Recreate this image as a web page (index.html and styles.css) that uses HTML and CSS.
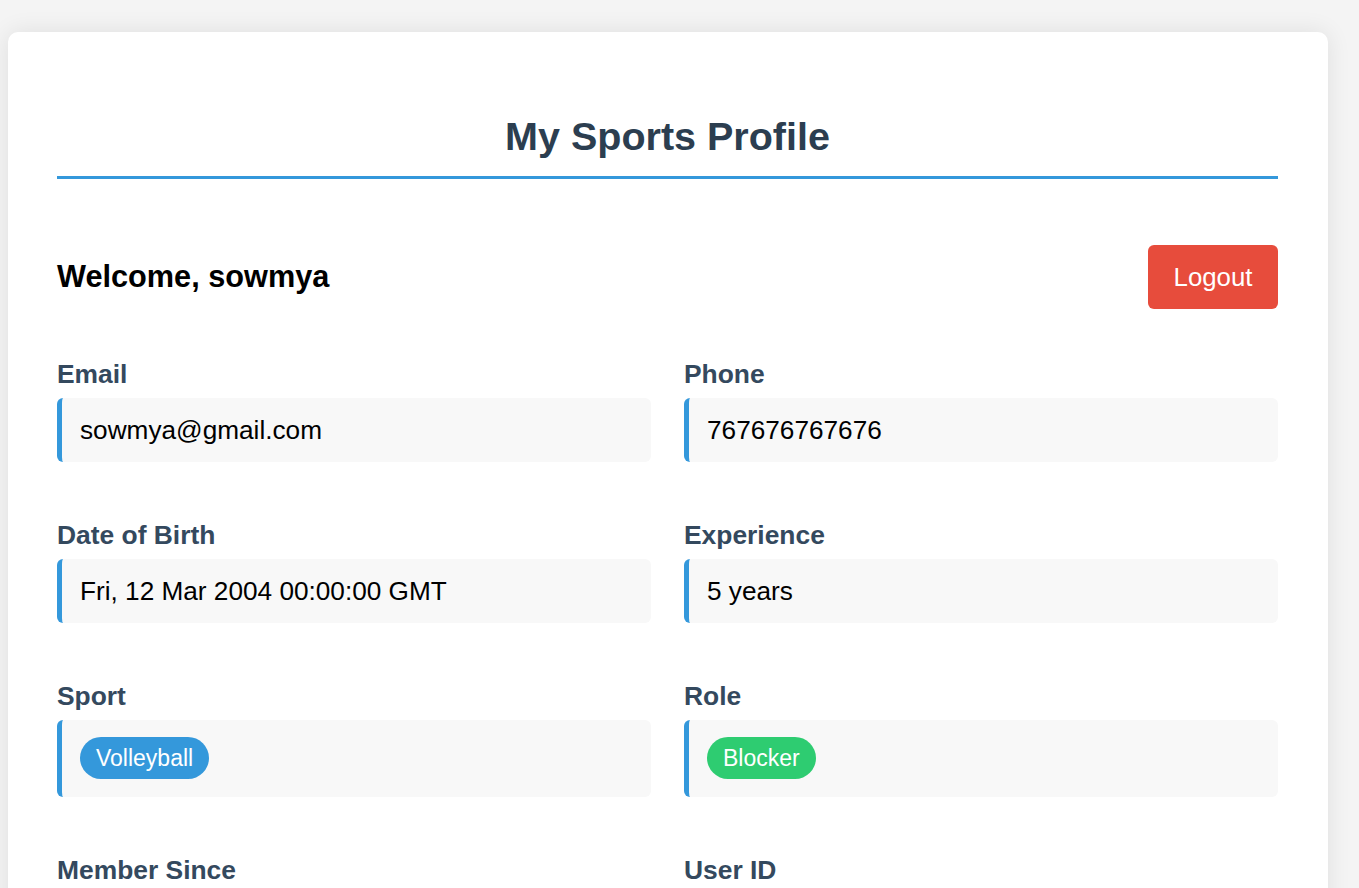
FILE: index.html
```html
<!DOCTYPE html>
<html lang="en">
<head>
<meta charset="utf-8">
<title>My Sports Profile</title>
<link rel="stylesheet" href="styles.css">
</head>
<body>
<div class="card">
  <h1 class="title">My Sports Profile</h1>
  <div class="welcome-row">
    <h2 class="welcome">Welcome, sowmya</h2>
    <button class="logout">Logout</button>
  </div>
  <div class="fields">
    <div class="field">
      <div class="label">Email</div>
      <div class="value">sowmya@gmail.com</div>
    </div>
    <div class="field">
      <div class="label">Phone</div>
      <div class="value">767676767676</div>
    </div>
    <div class="field">
      <div class="label">Date of Birth</div>
      <div class="value">Fri, 12 Mar 2004 00:00:00 GMT</div>
    </div>
    <div class="field">
      <div class="label">Experience</div>
      <div class="value">5 years</div>
    </div>
    <div class="field">
      <div class="label">Sport</div>
      <div class="value"><span class="badge badge-sport">Volleyball</span></div>
    </div>
    <div class="field">
      <div class="label">Role</div>
      <div class="value"><span class="badge badge-role">Blocker</span></div>
    </div>
    <div class="field">
      <div class="label">Member Since</div>
      <div class="value">Mon, 10 Mar 2025</div>
    </div>
    <div class="field">
      <div class="label">User ID</div>
      <div class="value">1</div>
    </div>
  </div>
</div>
</body>
</html>
```

FILE: styles.css
```css
html, body {
  margin: 0;
  padding: 0;
}
body {
  background: #f4f4f4;
  font-family: "Liberation Sans", Arial, sans-serif;
  color: #000;
}
.card {
  box-sizing: border-box;
  width: 1320px;
  margin: 32px 0 40px 8px;
  padding: 50px 50px 50px 49px;
  background: #fff;
  border-radius: 10px;
  box-shadow: 0 0 24px rgba(0, 0, 0, 0.09);
}
.title {
  margin: 32px 0 0 0;
  padding-bottom: 17px;
  border-bottom: 3px solid #3498db;
  text-align: center;
  font-size: 39.5px;
  line-height: 45px;
  font-weight: bold;
  color: #2c3e50;
}
.welcome-row {
  display: flex;
  justify-content: space-between;
  align-items: center;
  margin-top: 66px;
  margin-bottom: 51px;
}
.welcome {
  margin: 0;
  font-size: 30.7px;
  line-height: 36px;
  font-weight: bold;
  color: #000;
}
.logout {
  box-sizing: border-box;
  width: 130px;
  height: 64px;
  padding: 0;
  border: none;
  border-radius: 6px;
  background: #e74c3c;
  color: #fff;
  font-family: "Liberation Sans", Arial, sans-serif;
  font-size: 25.8px;
  cursor: pointer;
}
.fields {
  display: grid;
  grid-template-columns: 1fr 1fr;
  column-gap: 33px;
  row-gap: 59px;
}
.label {
  font-size: 26.4px;
  line-height: 29px;
  font-weight: bold;
  color: #34495e;
  margin-bottom: 9px;
}
.value {
  background: #f8f8f8;
  border-left: 5px solid #3498db;
  border-radius: 6px;
  padding: 16px 18px;
  font-size: 26.2px;
  line-height: 32px;
  color: #000;
}
.badge {
  display: inline-block;
  vertical-align: top;
  margin: 1px 0 2px 0;
  padding: 8px 16px;
  border-radius: 22px;
  font-size: 23px;
  line-height: 26px;
  color: #fff;
}
.badge-sport {
  background: #3498db;
}
.badge-role {
  background: #2ecc71;
}
```
